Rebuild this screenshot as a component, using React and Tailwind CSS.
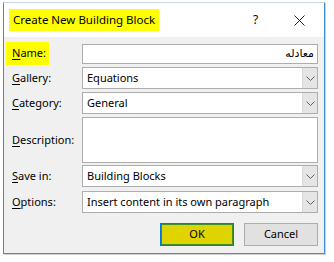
const font = { fontFamily: '"Noto Sans", "Open Sans", sans-serif' };

function Chevron() {
  return (
    <svg width="9" height="5" viewBox="0 0 9 5" className="block">
      <path d="M0.5 0.5 L4.5 4.5 L8.5 0.5" fill="none" stroke="#606060" strokeWidth="1" />
    </svg>
  );
}

function Combo({ value, className = "" }) {
  return (
    <div className={`flex h-[22px] border border-[#adadad] bg-white ${className}`}>
      <div className="flex-1 flex items-center pl-[4px] text-[11px] text-black whitespace-nowrap">{value}</div>
      <div className="w-[15px] flex items-center justify-center bg-[#e5e5e5] border-l border-[#d9d9d9]">
        <Chevron />
      </div>
    </div>
  );
}

function Label({ first, rest, className = "" }) {
  return (
    <div className={`text-[11px] text-black ${className}`}>
      <span className="underline underline-offset-2">{first}</span>
      {rest}
    </div>
  );
}

export default function App() {
  return (
    <div className="w-[334px] h-[262px] bg-white" style={font}>
      <div className="ml-[3px] mt-[2px] w-[322px] h-[252px] border border-[#3c8fd6] border-t-[#c8d6e2] bg-[#f0f0f0] flex flex-col shadow-[1px_1px_0_#d0d0d0]">
        {/* title bar */}
        <div className="h-[34px] bg-white flex items-center pl-[5px] shrink-0">
          <div className="bg-[#ffff00] h-[22px] w-[150px] flex items-center pl-[4px] text-[11.5px] text-black whitespace-nowrap">
            Create New Building Block
          </div>
          <div className="ml-[94px] text-[12px] text-black">?</div>
          <svg width="11" height="11" viewBox="0 0 11 11" className="ml-[36px]">
            <path d="M0.5 0.5 L10.5 10.5 M10.5 0.5 L0.5 10.5" stroke="#222" strokeWidth="1" />
          </svg>
        </div>

        {/* body */}
        <div className="flex-1 flex flex-col pt-[7px] pr-[6px]">
          <div className="flex items-center h-[20px]">
            <div className="w-[78px] pl-[2px]">
              <div className="bg-[#ffff00] w-[43px] h-[23px] flex items-center pl-[6px] -mt-[2px]">
                <Label first="N" rest="ame:" />
              </div>
            </div>
            <div
              className="flex-1 h-[20px] border border-[#adadad] bg-white flex items-center justify-end pr-[3px] text-[11px] text-black"
              style={{ fontFamily: '"DejaVu Sans", "Noto Sans", sans-serif' }}
            >
              معادله
            </div>
          </div>

          <div className="flex items-center mt-[3px]">
            <Label first="G" rest="allery:" className="w-[78px] pl-[8px]" />
            <Combo value="Equations" className="flex-1" />
          </div>

          <div className="flex items-center mt-[3px]">
            <Label first="C" rest="ategory:" className="w-[78px] pl-[8px]" />
            <Combo value="General" className="flex-1" />
          </div>

          <div className="flex items-center mt-[3px]">
            <Label first="D" rest="escription:" className="w-[78px] pl-[8px]" />
            <div className="flex-1 h-[46px] border border-[#adadad] bg-white" />
          </div>

          <div className="flex items-center mt-[2px]">
            <Label first="S" rest="ave in:" className="w-[78px] pl-[8px]" />
            <Combo value="Building Blocks" className="flex-1" />
          </div>

          <div className="flex items-center mt-[4px]">
            <Label first="O" rest="ptions:" className="w-[78px] pl-[8px]" />
            <Combo value="Insert content in its own paragraph" className="flex-1" />
          </div>

          <div className="flex justify-end mt-[10px] gap-[10px]">
            <div className="w-[74px] h-[23px] border border-[#0078d7] bg-[#e0d400]">
              <div className="w-full h-full border border-[#3f8f2c] flex items-center justify-center text-[11px] text-black">
                OK
              </div>
            </div>
            <div className="w-[74px] h-[23px] border border-[#adadad] bg-[#e1e1e1] flex items-center justify-center text-[11px] text-black">
              Cancel
            </div>
          </div>
        </div>
      </div>
    </div>
  );
}
